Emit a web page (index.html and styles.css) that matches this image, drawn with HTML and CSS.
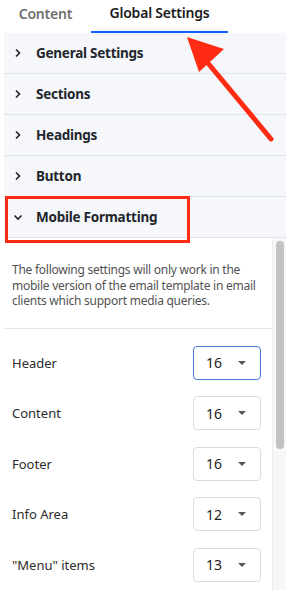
FILE: index.html
```html
<!DOCTYPE html>
<html>
<head>
<meta charset="utf-8">
<link rel="stylesheet" href="styles.css">
</head>
<body>
<div class="page">
  <div class="tabs">
    <div class="tab tab-content">Content</div>
    <div class="tab tab-active">Global Settings</div>
  </div>
  <div class="panel">
    <div class="acc-row"><span class="chev"><svg width="10" height="10" viewBox="0 0 10 10"><path d="M3 1.5 L6.5 5 L3 8.5" fill="none" stroke="#222" stroke-width="1.6"/></svg></span>General Settings</div>
    <div class="acc-row"><span class="chev"><svg width="10" height="10" viewBox="0 0 10 10"><path d="M3 1.5 L6.5 5 L3 8.5" fill="none" stroke="#222" stroke-width="1.6"/></svg></span>Sections</div>
    <div class="acc-row"><span class="chev"><svg width="10" height="10" viewBox="0 0 10 10"><path d="M3 1.5 L6.5 5 L3 8.5" fill="none" stroke="#222" stroke-width="1.6"/></svg></span>Headings</div>
    <div class="acc-row"><span class="chev"><svg width="10" height="10" viewBox="0 0 10 10"><path d="M3 1.5 L6.5 5 L3 8.5" fill="none" stroke="#222" stroke-width="1.6"/></svg></span>Button</div>
    <div class="acc-row"><span class="chev"><svg width="10" height="10" viewBox="0 0 10 10"><path d="M1.5 3.5 L5 7 L8.5 3.5" fill="none" stroke="#222" stroke-width="1.6"/></svg></span>Mobile Formatting</div>
    <div class="scroll-area">
      <div class="scroll-content">
        <p class="desc">The following settings will only work in the mobile version of the email template in email clients which support media queries.</p>
        <div class="settings">
          <div class="setting"><span class="label">Header</span><div class="select select-focus"><span>16</span><span class="caret"></span></div></div>
          <div class="setting"><span class="label">Content</span><div class="select"><span>16</span><span class="caret"></span></div></div>
          <div class="setting"><span class="label">Footer</span><div class="select"><span>16</span><span class="caret"></span></div></div>
          <div class="setting"><span class="label">Info Area</span><div class="select"><span>12</span><span class="caret"></span></div></div>
          <div class="setting"><span class="label">"Menu" items</span><div class="select"><span>13</span><span class="caret"></span></div></div>
        </div>
      </div>
      <div class="scrollbar"><div class="thumb"></div></div>
    </div>
  </div>
  <div class="annot-box"></div>
  <svg class="annot-arrow" width="286" height="160" viewBox="0 0 286 160">
    <line x1="271" y1="139" x2="207" y2="62" stroke="#ff2b12" stroke-width="5" stroke-linecap="round"/>
    <polygon points="187,37 224,49 199,72" fill="#ff2b12"/>
  </svg>
</div>
</body>
</html>
```
FILE: styles.css
```css
* { box-sizing: border-box; }
html, body { margin: 0; padding: 0; background: #fff; }
body { font-family: "Noto Sans", "Open Sans", sans-serif; color: #161616; }
.page { position: relative; width: 286px; height: 590px; overflow: hidden; }
.tabs { display: flex; height: 33px; }
.tab { display: flex; align-items: center; justify-content: center; font-size: 14px; font-weight: 600; letter-spacing: -0.2px; padding-bottom: 6px; }
.tab-content { width: 91px; color: #6f6f6f; }
.tab-active { width: 137px; color: #1b1b1b; border-bottom: 2px solid #0f62fe; }
.panel { margin-left: 4px; }
.acc-row { display: flex; align-items: center; height: 41px; background: #f5f7fb; border-bottom: 1px solid #dfe3ea; font-size: 13.5px; font-weight: 700; letter-spacing: -0.25px; color: #22262b; padding-left: 9px; padding-bottom: 1px; }
.chev { display: flex; width: 23px; }
.scroll-area { display: flex; height: 353px; }
.scroll-content { width: 269px; border-right: 1px solid #ececec; }
.desc { margin: 0; padding: 24px 8px 19px 8px; font-size: 12px; line-height: 15.5px; letter-spacing: -0.25px; color: #525252; border-bottom: 1px solid #e6e6e6; }
.settings { display: flex; flex-direction: column; gap: 16.5px; padding: 17px 11px 0 8px; }
.setting { display: flex; align-items: center; justify-content: space-between; height: 34px; }
.label { font-size: 13px; color: #2b2b2b; }
.select { display: flex; align-items: center; justify-content: space-between; width: 68px; height: 34px; border: 1px solid #dcdcdc; border-radius: 4px; padding: 0 14px 0 12px; font-size: 14px; color: #222; }
.select-focus { border: 1.5px solid #4b7bd8; }
.caret { width: 0; height: 0; border-left: 4px solid transparent; border-right: 4px solid transparent; border-top: 4px solid #555; }
.scrollbar { width: 13px; background: #f7f7f7; padding: 3px 2px 0 3px; }
.thumb { width: 8px; height: 208px; background: #c2c2c2; border-radius: 4px; }
.annot-box { position: absolute; left: 5px; top: 196px; width: 185px; height: 47px; border: 3px solid #ff2b12; }
.annot-arrow { position: absolute; left: 0; top: 0; }
```
